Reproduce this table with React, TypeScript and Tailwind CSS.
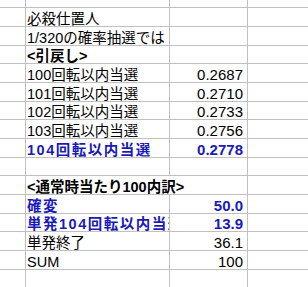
const line = 'border-[#c0c0c0]';
const font = { fontFamily: '"Liberation Sans", "Noto Sans CJK JP", sans-serif' };

type Row = {
  label?: string;
  value?: string;
  bold?: boolean;
  blue?: boolean;
  span?: boolean;
  h: string;
};

const rows: Row[] = [
  { h: 'h-[8px]' },
  { label: '必殺仕置人', h: 'h-[19px]' },
  { label: '1/320の確率抽選では', h: 'h-[19px]' },
  { label: '<引戻し>', bold: true, h: 'h-[18px]' },
  { label: '100回転以内当選', value: '0.2687', h: 'h-[19px]' },
  { label: '101回転以内当選', value: '0.2710', h: 'h-[19px]' },
  { label: '102回転以内当選', value: '0.2733', h: 'h-[18px]' },
  { label: '103回転以内当選', value: '0.2756', h: 'h-[19px]' },
  { label: '104回転以内当選', value: '0.2778', bold: true, blue: true, h: 'h-[19px]' },
  { h: 'h-[18px]' },
  { label: '<通常時当たり100内訳>', bold: true, span: true, h: 'h-[19px]' },
  { label: '確変', value: '50.0', bold: true, blue: true, h: 'h-[19px]' },
  { label: '単発104回転以内当選', value: '13.9', bold: true, blue: true, h: 'h-[18px]' },
  { label: '単発終了', value: '36.1', h: 'h-[19px]' },
  { label: 'SUM', value: '100', h: 'h-[19px]' },
  { h: 'h-[18px]' },
];

function App() {
  return (
    <div className="w-[308px] h-[287px] overflow-hidden bg-white text-[14.5px] leading-[14px]" style={font}>
      {rows.map((r, i) => {
        const color = r.blue ? 'text-[#1a1ab8]' : 'text-black';
        const weight = r.bold ? 'font-bold' : 'font-normal';
        const spacing = r.blue ? 'tracking-[1.5px]' : 'tracking-normal';
        return (
          <div key={i} className={`flex ${r.h}`}>
            <div className={`w-[26px] shrink-0 border-r border-b ${line}`} />
            {r.span ? (
              <div className={`w-[222px] shrink-0 border-r border-b ${line} flex items-end pl-[1px] whitespace-nowrap ${color} ${weight}`}>
                {r.label}
              </div>
            ) : (
              <>
                <div className={`w-[144px] shrink-0 border-r border-b ${line} flex items-end pl-[1px] overflow-hidden whitespace-nowrap ${color} ${weight} ${spacing}`}>
                  {r.label}
                </div>
                <div className={`w-[78px] shrink-0 border-r border-b ${line} flex items-end justify-end pr-[4px] whitespace-nowrap text-[15px] ${color} ${weight}`}>
                  {r.value}
                </div>
              </>
            )}
            <div className={`flex-1 border-b ${line}`} />
          </div>
        );
      })}
    </div>
  );
}

export default App;
